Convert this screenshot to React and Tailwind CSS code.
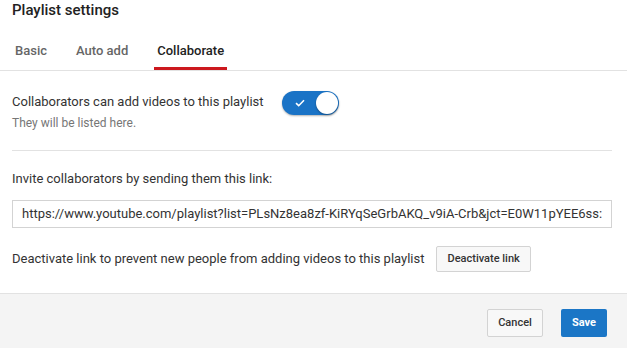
import React from "react";

export default function App() {
  return (
    <div
      className="w-[627px] h-[348px] overflow-hidden bg-white text-[#333]"
      style={{ fontFamily: "Roboto, 'Liberation Sans', Arial, sans-serif" }}
    >
      <div className="pl-[12px] text-[15px] leading-[20px] font-medium text-[#222]">
        Playlist settings
      </div>
      <div className="mt-[14px] flex gap-[23px] pl-[12px] border-b border-[#e2e2e2]">
        <div className="h-[36px] px-[3px] flex items-center text-[13px] font-medium text-[#666] border-b-[3px] border-transparent">
          Basic
        </div>
        <div className="h-[36px] px-[3px] flex items-center text-[13px] font-medium text-[#666] border-b-[3px] border-transparent">
          Auto add
        </div>
        <div className="h-[36px] px-[3px] flex items-center text-[13px] font-medium text-[#222] border-b-[3px] border-[#cc181e]">
          Collaborate
        </div>
      </div>
      <div className="pl-[12px] pr-[15px]">
        <div className="pt-[20px] pb-[19px] flex items-start border-b border-[#e2e2e2]">
          <div className="mt-[2px] flex flex-col">
            <div className="text-[13px] leading-[18px] text-[#333]">
              Collaborators can add videos to this playlist
            </div>
            <div className="mt-[4px] text-[12px] leading-[16px] text-[#767676]">
              They will be listed here.
            </div>
          </div>
          <div className="ml-[18px] w-[57px] h-[24px] rounded-full bg-[#1a73c6] flex items-center justify-between pl-[13px] pr-[1px] shadow-[0_1px_2px_rgba(0,0,0,0.3)]">
            <svg width="10" height="8" viewBox="0 0 10 8">
              <path d="M1 4.2 L3.7 6.7 L9 1.3" fill="none" stroke="white" strokeWidth="1.6" />
            </svg>
            <div className="w-[22px] h-[22px] rounded-full bg-white shadow-[0_1px_2px_rgba(0,0,0,0.35)]" />
          </div>
        </div>
        <div className="mt-[19px] text-[13px] leading-[18px] text-[#333]">
          Invite collaborators by sending them this link:
        </div>
        <div className="mt-[12px] h-[28px] border border-[#d3d3d3] flex items-center pl-[9px] overflow-hidden whitespace-nowrap text-[13px] text-[#333]">
          https://www.youtube.com/playlist?list=PLsNz8ea8zf-KiRYqSeGrbAKQ_v9iA-Crb&amp;jct=E0W11pYEE6ss:
        </div>
        <div className="mt-[18px] flex items-center">
          <div className="text-[13px] leading-[18px] text-[#333]">
            Deactivate link to prevent new people from adding videos to this playlist
          </div>
          <div className="ml-[12px] h-[26px] px-[10px] flex items-center rounded-[2px] border border-[#d3d3d3] bg-[#f8f8f8] text-[11px] font-medium text-[#333]">
            Deactivate link
          </div>
        </div>
      </div>
      <div className="mt-[21px] h-[60px] bg-[#f4f4f4] border-t border-[#e2e2e2] flex items-start justify-end gap-[18px] pr-[20px] pt-[15px]">
        <div className="h-[28px] w-[56px] flex items-center justify-center rounded-[2px] border border-[#d3d3d3] bg-[#f8f8f8] text-[11px] font-medium text-[#333]">
          Cancel
        </div>
        <div className="h-[28px] w-[46px] flex items-center justify-center rounded-[2px] bg-[#1b76c6] text-[11px] font-bold text-white">
          Save
        </div>
      </div>
    </div>
  );
}
